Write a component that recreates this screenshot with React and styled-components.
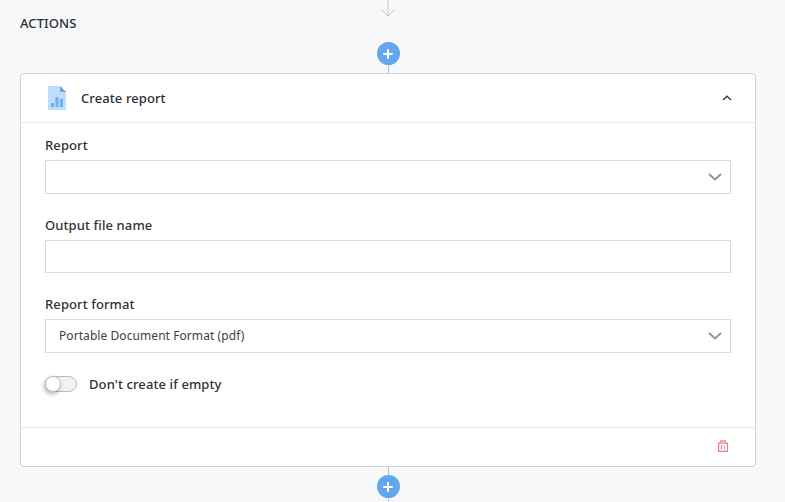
import React from 'react';
import styled, { createGlobalStyle } from 'styled-components';

const GlobalStyle = createGlobalStyle`
  html, body {
    margin: 0;
    padding: 0;
    background: #f7f8fa;
    font-family: "Noto Sans", "Open Sans", sans-serif;
    overflow: hidden;
  }
  * { box-sizing: border-box; }
`;

const Page = styled.div`
  width: 736px;
  margin-left: 20px;
  display: flex;
  flex-direction: column;
  align-items: center;
`;

const TopArrow = styled.svg`
  display: block;
  width: 16px;
  height: 17px;
`;

const SectionTitle = styled.div`
  align-self: flex-start;
  height: 16px;
  margin-top: -2px;
  font-size: 13px;
  letter-spacing: 0.1px;
  line-height: 16px;
  font-weight: 500;
  color: #2b2f36;
`;

const AddButton = styled.button`
  width: 23px;
  height: 23px;
  margin-top: ${(p) => p.$top}px;
  padding: 0;
  flex: none;
  border: none;
  border-radius: 50%;
  background: #62a7ee;
  display: flex;
  align-items: center;
  justify-content: center;
`;

const Connector = styled.div`
  width: 1px;
  height: ${(p) => p.$height}px;
  flex: none;
  background: #b9c0c7;
`;

const Card = styled.section`
  width: 100%;
  height: 394px;
  background: #fff;
  border: 1px solid #ccd1d8;
  border-radius: 4px;
  display: flex;
  flex-direction: column;
`;

const CardHeader = styled.header`
  height: 49px;
  flex: none;
  padding: 0 23px 0 27px;
  border-bottom: 1px solid #e8eaed;
  display: flex;
  align-items: center;
`;

const CardTitle = styled.div`
  flex: 1;
  margin-left: 15px;
  font-size: 13px;
  letter-spacing: 0.1px;
  font-weight: 500;
  color: #2b2f36;
`;

const CardBody = styled.div`
  flex: 1;
  padding: 14px 24px 0;
  display: flex;
  flex-direction: column;
`;

const Field = styled.div`
  margin-bottom: ${(p) => p.$gap}px;
`;

const Label = styled.label`
  display: block;
  height: 17px;
  margin-bottom: 6px;
  font-size: 13px;
  letter-spacing: 0.1px;
  line-height: 17px;
  font-weight: 500;
  color: #2f3238;
`;

const Control = styled.div`
  height: ${(p) => p.$height}px;
  padding: 0 8px 0 13px;
  border: 1px solid #d5dde0;
  display: flex;
  align-items: center;
  justify-content: space-between;
`;

const ControlValue = styled.span`
  margin-bottom: 2px;
  font-size: 12px;
  letter-spacing: 0.07px;
  color: #3c4048;
`;

const ToggleRow = styled.div`
  display: flex;
  align-items: center;
  gap: 12px;
`;

const ToggleTrack = styled.div`
  position: relative;
  width: 32px;
  height: 16px;
  border: 1px solid #bdbdbd;
  border-radius: 8px;
  background: #f1f1f1;
`;

const ToggleKnob = styled.div`
  position: absolute;
  left: -1px;
  top: -1px;
  width: 16px;
  height: 16px;
  border-radius: 50%;
  background: #fff;
  border: 1px solid #c4c4c4;
  box-shadow: -1px 2px 4px rgba(0, 0, 0, 0.3);
`;

const ToggleLabel = styled.span`
  font-size: 13px;
  letter-spacing: 0.1px;
  font-weight: 500;
  color: #2f3238;
`;

const CardFooter = styled.footer`
  height: 39px;
  flex: none;
  padding: 0 27px 2px 0;
  border-top: 1px solid #e8eaed;
  display: flex;
  align-items: center;
  justify-content: flex-end;
`;

const Plus = () => (
  <svg width="10" height="10" viewBox="0 0 10 10">
    <path d="M5 1v8M1 5h8" stroke="#fff" strokeWidth="2" strokeLinecap="round" />
  </svg>
);

const Chevron = () => (
  <svg width="14" height="8" viewBox="0 0 14 8" fill="none">
    <path d="M1 1l6 5.5L13 1" stroke="#87929b" strokeWidth="1.8" />
  </svg>
);

const ReportIcon = () => (
  <svg width="18" height="24" viewBox="0 0 18 24">
    <path d="M0 0h12l6 6v18H0z" fill="#bfdcfa" />
    <path d="M12 0l6 6h-6z" fill="#62a7ee" />
    <path d="M3 17h3v4H3zM7.5 11h3v10h-3zM12 13h3v8h-3z" fill="#6fb0f0" />
  </svg>
);

const TrashIcon = () => (
  <svg width="10" height="12" viewBox="0 0 10 12" fill="none">
    <path d="M0.6 3.2h8.8v8.2H0.6zM2.8 3V0.9h4.4V3" stroke="#ea8184" strokeWidth="1.2" />
    <path d="M3.5 5v4.5" stroke="#c58fc0" strokeWidth="1.2" />
    <path d="M6.5 5v4.5" stroke="#eda0a0" strokeWidth="1.2" />
  </svg>
);

const App = () => {
  return (
    <>
      <GlobalStyle />
      <Page>
        <TopArrow viewBox="0 0 16 17" fill="none">
          <path d="M8 0v15.5M1.5 9.5L8 16l6.5-6.5" stroke="#c3c8cd" strokeWidth="1" />
        </TopArrow>
        <SectionTitle>ACTIONS</SectionTitle>
        <AddButton $top={11}><Plus /></AddButton>
        <Connector $height={8} />
        <Card>
          <CardHeader>
            <ReportIcon />
            <CardTitle>Create report</CardTitle>
            <svg width="10" height="6" viewBox="0 0 10 6" fill="none">
              <path d="M1 5l4-3.8L9 5" stroke="#2b3a4a" strokeWidth="1.3" />
            </svg>
          </CardHeader>
          <CardBody>
            <Field $gap={23}>
              <Label>Report</Label>
              <Control $height={34}><span /><Chevron /></Control>
            </Field>
            <Field $gap={23}>
              <Label>Output file name</Label>
              <Control $height={33} />
            </Field>
            <Field $gap={22}>
              <Label>Report format</Label>
              <Control $height={34}>
                <ControlValue>Portable Document Format (pdf)</ControlValue>
                <Chevron />
              </Control>
            </Field>
            <ToggleRow>
              <ToggleTrack><ToggleKnob /></ToggleTrack>
              <ToggleLabel>Don't create if empty</ToggleLabel>
            </ToggleRow>
          </CardBody>
          <CardFooter>
            <TrashIcon />
          </CardFooter>
        </Card>
        <Connector $height={8} />
        <AddButton $top={0}><Plus /></AddButton>
        <Connector $height={4} />
      </Page>
    </>
  );
};

export default App;
